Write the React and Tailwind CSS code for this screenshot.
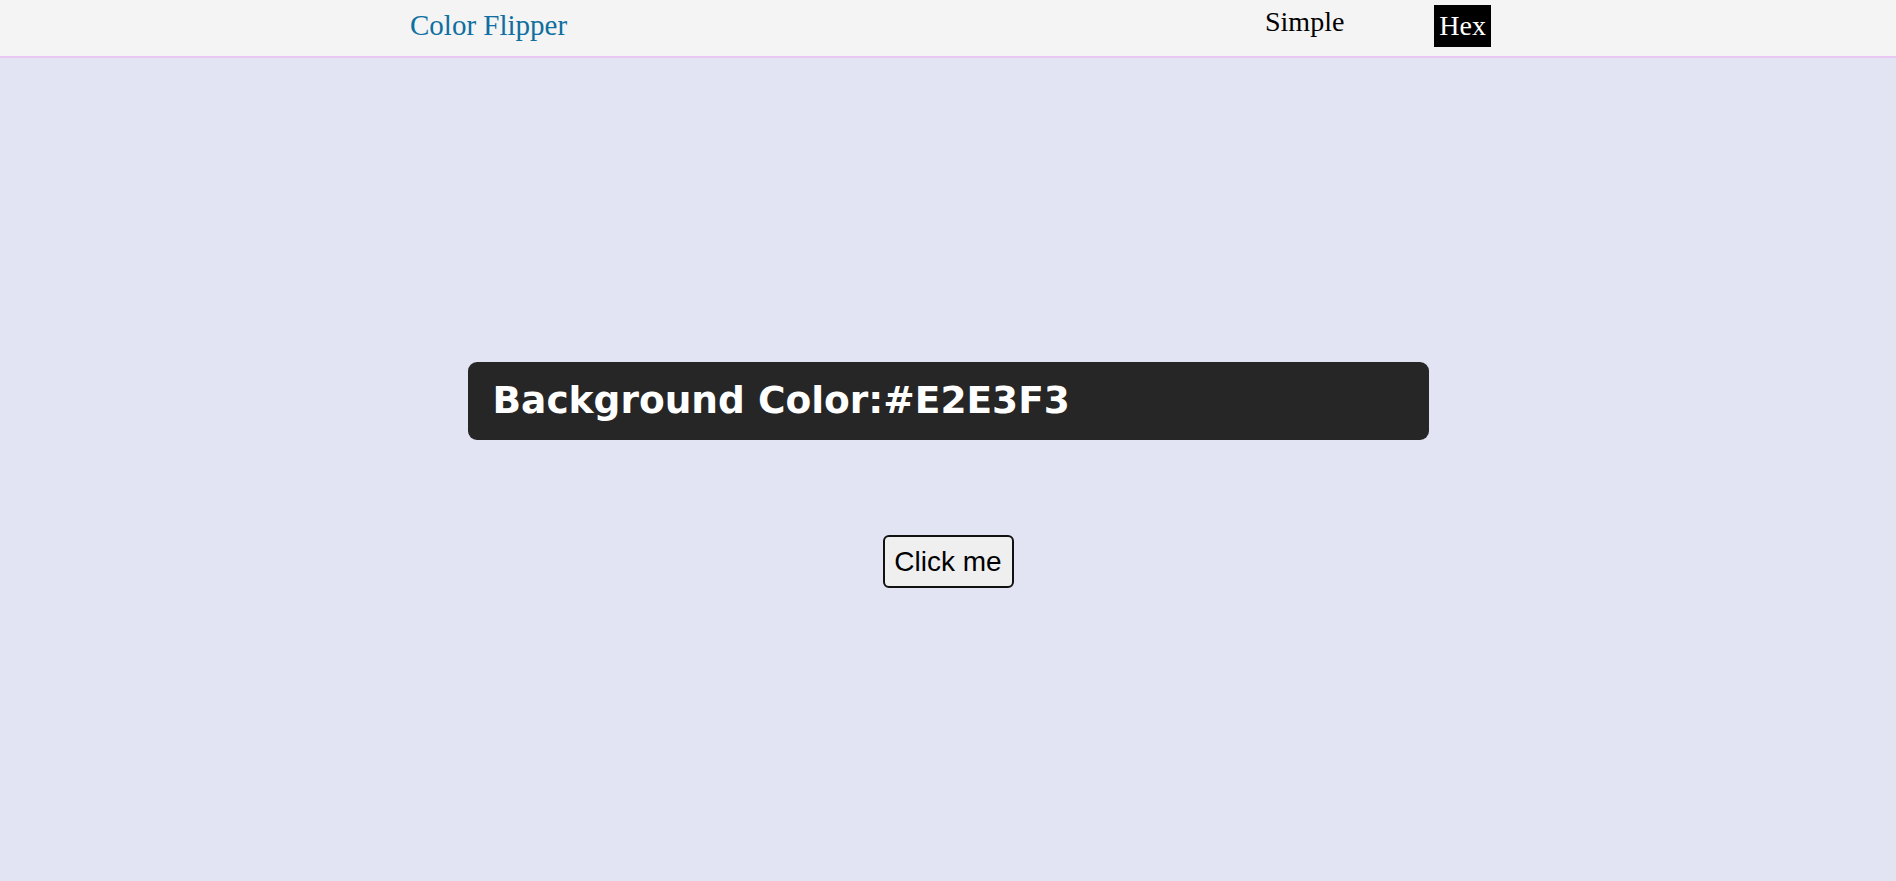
import { useState } from "react";

// Colores de fondo posibles
const colors = ["#E2E3F3", "#F1F5F8", "#FDE68A", "#BBF7D0", "#FBCFE8"];

export default function App() {
  const [color, setColor] = useState("#E2E3F3");

  // Cambia el color de fondo
  const handleClick = () => {
    const next = colors[Math.floor(Math.random() * colors.length)];
    setColor(next);
  };

  return (
    <div className="min-h-[881px] bg-[#e2e3f3]" style={{ backgroundColor: color }}>

      {/* Navbar */}
      <nav className="flex items-start h-[58px] bg-[#f4f4f4] border-b-2 border-[#e8c8f3] font-['Liberation_Serif',serif] text-[28px] leading-[31px]">
        <a href="#" className="ml-[410px] mt-[10px] text-[29px] text-[#0f6fa0]">
          Color Flipper
        </a>
        <ul className="flex items-start ml-auto mr-[405px]">
          <li className="mt-[6px] text-black">
            <a href="#">Simple</a>
          </li>
          <li className="ml-[90px] mt-[5px] bg-black text-white px-[5px] py-[5px] leading-[32px]">
            <a href="#">Hex</a>
          </li>
        </ul>
      </nav>

      {/* Contenido */}
      <main className="flex flex-col items-center pt-[304px]">
        <div className="flex items-center w-[961px] h-[78px] bg-[#262626] rounded-[9px] pl-[25px]">
          <h2 className="font-['DejaVu_Sans',sans-serif] font-bold text-[37.5px] text-white leading-none">
            Background Color:{color}
          </h2>
        </div>

        <button
          onClick={handleClick}
          className="mt-[95px] w-[131px] h-[53px] bg-[#efefef] border-2 border-[#111] rounded-[6px] font-['Liberation_Sans',sans-serif] text-[28px] text-black leading-[32px]"
        >
          Click me
        </button>
      </main>

    </div>
  );
}
